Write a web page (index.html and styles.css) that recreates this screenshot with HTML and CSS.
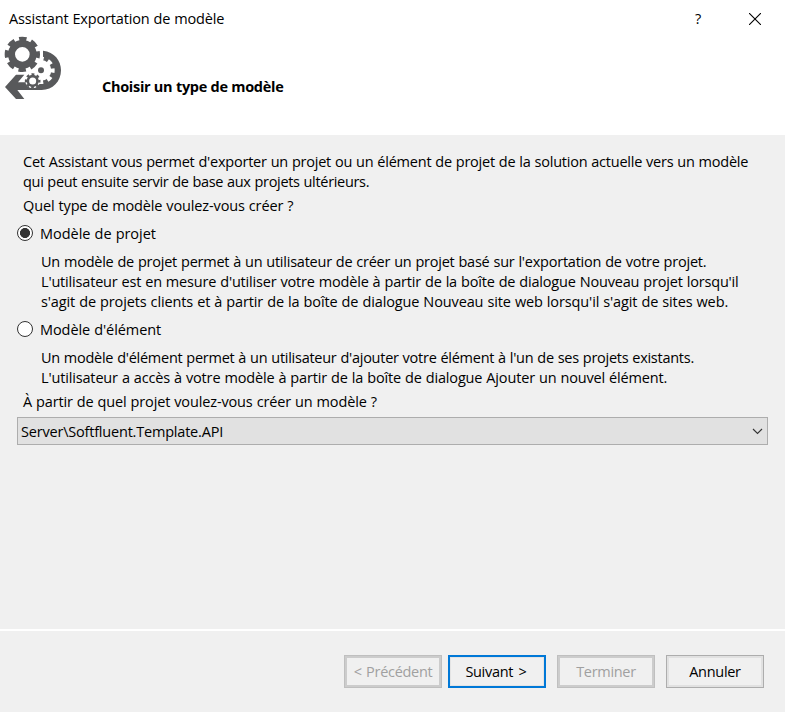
FILE: index.html
```html
<!DOCTYPE html>
<html lang="fr">
<head>
<meta charset="utf-8">
<title>Assistant Exportation de modèle</title>
<link rel="stylesheet" href="styles.css">
</head>
<body>
<div class="dialog">
  <header class="header">
    <div class="titlebar">
      <span class="title">Assistant Exportation de modèle</span>
      <span class="help">?</span>
      <svg class="close" width="12" height="12" viewBox="0 0 12 12"><path d="M0 0L12 12M12 0L0 12"/></svg>
    </div>
    <div class="banner">
      <svg class="logo" width="70" height="75" viewBox="0 0 210 225">
        <path fill="#58595b" d="M129 62C163 66 183 91 183 121C183 155 158 180 125 180H52L73 207H48L15 171L48 134H73L54 157H129Z"/>
        <circle cx="123" cy="121" r="31" fill="#fff"/>
        <circle cx="123" cy="121" r="35" fill="none" stroke="#fff" stroke-width="12" stroke-dasharray="14 13.49" stroke-dashoffset="7"/>
        <circle cx="123" cy="121" r="9" fill="#58595b"/>
        <circle cx="98" cy="153" r="22" fill="#fff"/>
        <circle cx="98" cy="153" r="14.5" fill="none" stroke="#58595b" stroke-width="8"/>
        <circle cx="98" cy="153" r="20" fill="none" stroke="#58595b" stroke-width="7" stroke-dasharray="8.5 7.2" stroke-dashoffset="4"/>
        <circle cx="67" cy="73" r="48" fill="#fff"/>
        <circle cx="67" cy="73" r="32.5" fill="none" stroke="#58595b" stroke-width="21"/>
        <circle cx="67" cy="73" r="46" fill="none" stroke="#58595b" stroke-width="14" stroke-dasharray="22 14.13" stroke-dashoffset="11"/>
      </svg>
      <h1><span class="heading">Choisir un type de modèle</span></h1>
    </div>
  </header>
  <main class="content">
    <p><span class="l1">Cet Assistant vous permet d'exporter un projet ou un élément de projet de la solution actuelle vers un modèle</span><br><span class="l2">qui peut ensuite servir de base aux projets ultérieurs.</span></p>
    <p><span class="l3">Quel type de modèle voulez-vous créer ?</span></p>
    <div class="option"><span class="radio checked"></span><span class="l4">Modèle de projet</span></div>
    <p class="detail"><span class="l5">Un modèle de projet permet à un utilisateur de créer un projet basé sur l'exportation de votre projet.</span><br><span class="l6">L'utilisateur est en mesure d'utiliser votre modèle à partir de la boîte de dialogue Nouveau projet lorsqu'il</span><br><span class="l7">s'agit de projets clients et à partir de la boîte de dialogue Nouveau site web lorsqu'il s'agit de sites web.</span></p>
    <div class="option"><span class="radio"></span><span class="l8">Modèle d'élément</span></div>
    <p class="detail"><span class="l9">Un modèle d'élément permet à un utilisateur d'ajouter votre élément à l'un de ses projets existants.</span><br><span class="l10">L'utilisateur a accès à votre modèle à partir de la boîte de dialogue Ajouter un nouvel élément.</span></p>
    <p><span class="l11">À partir de quel projet voulez-vous créer un modèle ?</span></p>
    <div class="select"><span class="l12">Server\Softfluent.Template.API</span>
      <svg width="11" height="7" viewBox="0 0 11 7"><path d="M1 1L5.5 5.5L10 1"/></svg>
    </div>
  </main>
  <footer class="footer">
    <div class="button disabled"><span class="b1">&lt; Précédent</span></div>
    <div class="button primary"><span class="b2">Suivant &gt;</span></div>
    <div class="button disabled"><span class="b3">Terminer</span></div>
    <div class="button"><span class="b4">Annuler</span></div>
  </footer>
</div>
</body>
</html>
```
FILE: styles.css
```css
* { box-sizing: border-box; }
body {
  margin: 0;
  font: 14.5px/20px "Open Sans", "Noto Sans", sans-serif;
  letter-spacing: -0.3px;
  word-spacing: 0.4px;
  color: #000;
  background: #f0f0f0;
}
span { white-space: nowrap; }
.dialog { display: flex; flex-direction: column; width: 785px; height: 712px; background: #f0f0f0; }
.header { height: 135px; background: #fff; }
.titlebar { display: flex; align-items: center; height: 30px; padding: 7px 24px 0 9px; }
.title { flex: 1; letter-spacing: -0.16px; }
.help { margin-right: 48px; }
.close { fill: none; stroke: #000; stroke-width: 1.1; }
.banner { display: flex; }
.logo { flex: none; }
h1 { margin: 47px 0 0 32px; font-size: 14.5px; line-height: 20px; font-weight: 700; word-spacing: 0.1px; }
.content { flex: 1; padding: 17px 17px 0; }
p { margin: 0 0 4px 6px; }
.l1 { letter-spacing: -0.228px; }
.l2 { letter-spacing: -0.315px; }
.l3 { letter-spacing: -0.135px; }
.l4 { letter-spacing: -0.03px; }
.l5 { letter-spacing: -0.23px; }
.l6 { letter-spacing: -0.18px; }
.l7 { letter-spacing: -0.12px; }
.l8 { letter-spacing: -0.08px; }
.l9 { letter-spacing: -0.26px; }
.l10 { letter-spacing: -0.155px; }
.l11 { letter-spacing: -0.142px; }
.l12 { letter-spacing: -0.2px; padding-top: 1px; }
.b1 { word-spacing: 1px; }
.b2 { word-spacing: 2px; margin-right: 2px; }
.option { display: flex; align-items: center; gap: 7px; height: 20px; margin: 8px 0; }
.radio { width: 16px; height: 16px; margin-top: -2px; border: 1px solid #333; border-radius: 50%; background: #fff; }
.checked { background: radial-gradient(circle, #333 4.7px, #fff 5.3px); }
.detail { margin-left: 24px; }
.select {
  display: flex; align-items: center; justify-content: space-between;
  height: 28px; margin-top: 5px; padding: 0 4px 0 3px;
  border: 1px solid #adadad; background: #e1e1e1;
}
.select svg { fill: none; stroke: #333; stroke-width: 1.1; }
.footer {
  display: flex; justify-content: flex-end; height: 83px; padding: 24px 21px 0 0;
  border-top: 2px solid #fff;
}
.button {
  display: flex; align-items: center; justify-content: center;
  width: 98px; height: 33px; margin-left: 11px;
  border: 1px solid #adadad; box-shadow: inset 0 0 0 2px #e1e1e1;
}
.primary { margin-left: 6px; border: 2px solid #0078d7; box-shadow: inset 0 0 0 1px #e4e4e4; }
.disabled { color: #a0a0a0; border-color: #bfbfbf; box-shadow: inset 0 0 0 2px #ccc; }
```
